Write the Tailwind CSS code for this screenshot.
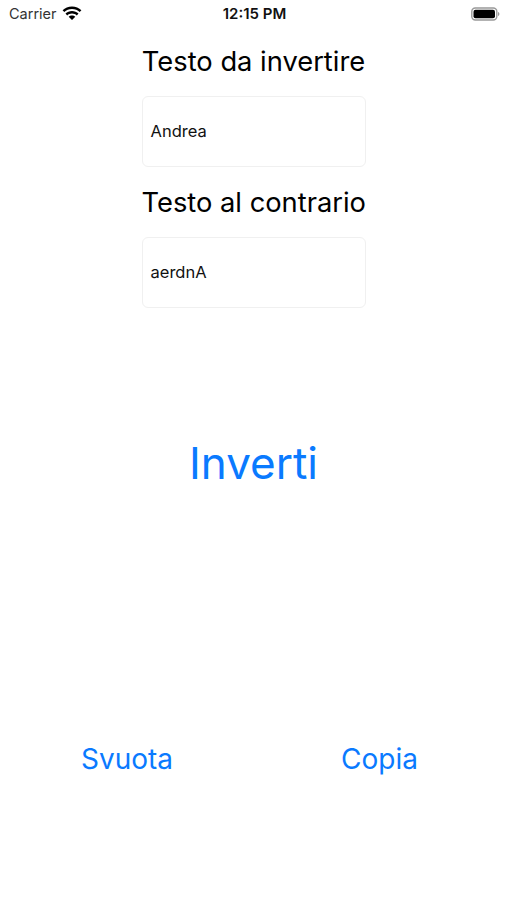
<!DOCTYPE html>
<html><head><meta charset="utf-8"><script src="https://cdn.jsdelivr.net/npm/@tailwindcss/browser@4"></script></head>
<body class="bg-white font-['Inter','Liberation_Sans',sans-serif]">
<div class="relative w-[507px] h-[900px] flex flex-col items-center overflow-hidden">
  <div class="w-full h-[28px] flex items-center justify-between pl-[9px] pr-[7px] text-[#111]">
    <div class="flex items-center gap-[5px] w-[150px]">
      <span class="text-[14.500px] text-[#333]">Carrier</span>
      <svg width="20" height="14" viewBox="0 0 20 14" class="-mt-[2px]"><path fill="#000" d="M10 .5C6.300.5 3 2 .6 4.300l1.700 1.800C4.300 4.200 7 3 10 3s5.700 1.200 7.700 3.100l1.700-1.800C17 2 13.700.5 10 .5zM10 5C7.500 5 5.200 6 3.500 7.600l1.700 1.800C6.500 8.200 8.200 7.500 10 7.500s3.500.7 4.800 1.900l1.700-1.800C14.800 6 12.500 5 10 5zM10 9.500c-1.300 0-2.400.5-3.300 1.300L10 14l3.300-3.200c-.9-.8-2-1.300-3.300-1.300z"/></svg>
    </div>
    <span class="text-[15px] font-semibold">12:15 PM</span>
    <div class="w-[150px] flex justify-end">
      <svg width="29" height="14" viewBox="0 0 29 14"><rect x=".8" y="1" width="25" height="12" rx="3.500" fill="none" stroke="#999" stroke-width="1.400"/><rect x="2.500" y="2.700" width="21.500" height="8.600" rx="2" fill="#000"/><path d="M27 5v4c.8-.3 1.400-1.100 1.400-2S27.800 5.300 27 5z" fill="#999"/></svg>
    </div>
  </div>
  <div class="w-[224px] flex flex-col mt-[16px]">
    <div class="text-[27.300px] leading-[36px] text-black text-center whitespace-nowrap">Testo da invertire</div>
    <div class="mt-[16px] h-[71px] border border-[#f0f0f0] rounded-[6px] flex items-center pl-[8px] text-[16.500px] text-[#111]">Andrea</div>
    <div class="mt-[18px] text-[27.300px] leading-[36px] text-black text-center whitespace-nowrap">Testo al contrario</div>
    <div class="mt-[16px] h-[71px] border border-[#f0f0f0] rounded-[6px] flex items-center pl-[8px] text-[16.500px] text-[#111]">aerdnA</div>
  </div>
  <div class="mt-[127px] text-[44px] leading-[56px] text-[#0a7aff]">Inverti</div>
  <div class="mt-[250px] w-full flex justify-between pl-[81px] pr-[89px] text-[28px] leading-[36px] text-[#0a7aff]">
    <span>Svuota</span><span>Copia</span>
  </div>
</div>
</body></html>
